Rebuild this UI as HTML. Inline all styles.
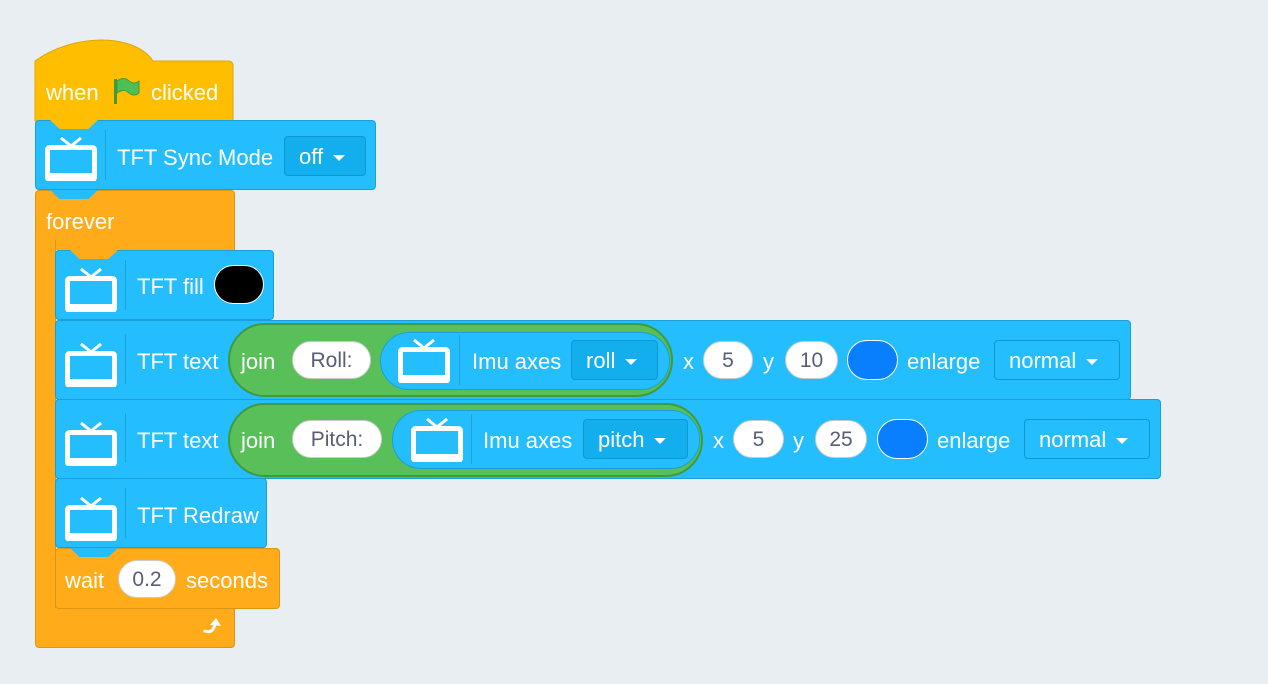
<!DOCTYPE html>
<html><head><meta charset="utf-8"><style>
*{margin:0;padding:0;box-sizing:border-box}
body{width:1268px;height:684px;background:#e9eef2;position:relative;overflow:hidden;font-family:"Liberation Sans","DejaVu Sans",sans-serif;font-size:22px;color:#fff}
.a{position:absolute}
.blue{background:#24bdfd;border:1px solid #1a9fd8;border-radius:4px}
.org{background:#ffab1a;border:1px solid #de9512}
.t{position:absolute;white-space:nowrap;line-height:24px;margin-top:2px}
.sep{position:absolute;width:1px;background:#1aa3dc}
.dd{position:absolute;background:#12aeee;border:1px solid #0e97d1;border-radius:4px}
.dd .t{margin-top:0}
.pill{position:absolute;background:#fff;border:1px solid #ccc;border-radius:20px;color:#575e75;text-align:center;line-height:38px;font-size:21px}
.tri{display:inline-block;width:0;height:0;border-left:6px solid transparent;border-right:6px solid transparent;border-top:6px solid #fff;vertical-align:middle;margin-left:10px}
.notch{position:absolute;width:48px;height:9px;clip-path:polygon(0 0,100% 0,80% 100%,20% 100%)}
</style></head><body>
<svg class="a" style="left:34px;top:39px" width="201" height="85"><path d="M1 22 C40 -6 100 -6 119 22 L194 22 Q199 22 199 27 L199 82 L1 82 Z" fill="#ffbf00" stroke="#e0a500"/></svg>
<div class="t" style="left:46px;top:79px">when</div>
<svg class="a" style="left:112px;top:76px" width="28" height="30"><rect x="2" y="3" width="3" height="25" fill="#45993d"/><path d="M5 5 Q12 0 17 5 Q22 9 27 5 L27 17 Q22 21 17 17 Q12 12 5 17Z" fill="#4cbf56" stroke="#45993d"/></svg>
<div class="t" style="left:151px;top:79px">clicked</div>

<div class="a blue" style="left:35px;top:120px;width:341px;height:70px"></div>
<div class="notch" style="left:50px;top:120px;background:#ffbf00"></div>
<svg class="a" style="left:45px;top:137px" width="52" height="44"><path d="M16 1 L26 9 L36 1" stroke="#fff" stroke-width="3" fill="none"/><rect x="2.5" y="10.5" width="47" height="32" rx="2" fill="none" stroke="#fff" stroke-width="5"/><rect x="2" y="36" width="48" height="7" fill="#fff"/></svg>
<div class="sep" style="left:105px;top:130px;height:50px"></div>
<div class="t" style="left:117px;top:144px">TFT Sync Mode</div>
<div class="dd" style="left:284px;top:136px;width:82px;height:40px"><div class="t" style="left:14px;top:8px">off<span class="tri"></span></div></div>

<div class="a org" style="left:35px;top:190px;width:200px;height:60px;border-radius:4px 4px 0 0;border-bottom:none"></div>
<div class="a org" style="left:35px;top:240px;width:21px;height:380px;border-top:none;border-bottom:none"></div>
<div class="a org" style="left:35px;top:608px;width:200px;height:40px;border-radius:0 0 4px 4px;border-top:none"></div>
<div class="notch" style="left:50px;top:190px;background:#24bdfd"></div>
<div class="t" style="left:46px;top:208px">forever</div>
<svg class="a" style="left:201px;top:616px" width="24" height="22"><path d="M4 15 Q12 18 14 8" stroke="#fff" stroke-width="3" fill="none" stroke-linecap="round"/><path d="M9 9 L15 2 L20 10Z" fill="#fff"/></svg>

<div class="a blue" style="left:55px;top:250px;width:219px;height:70px"></div>
<div class="notch" style="left:70px;top:250px;background:#ffab1a"></div>
<svg class="a" style="left:65px;top:268px" width="52" height="44"><path d="M16 1 L26 9 L36 1" stroke="#fff" stroke-width="3" fill="none"/><rect x="2.5" y="10.5" width="47" height="32" rx="2" fill="none" stroke="#fff" stroke-width="5"/><rect x="2" y="36" width="48" height="7" fill="#fff"/></svg>
<div class="sep" style="left:125px;top:260px;height:50px"></div>
<div class="t" style="left:137px;top:273px">TFT fill</div>
<div class="a" style="left:214px;top:265px;width:50px;height:39px;border-radius:20px;background:#000;border:1px solid #fff"></div>

<div class="a blue" style="left:55px;top:320px;width:1076px;height:80px"></div>
<svg class="a" style="left:65px;top:343px" width="52" height="44"><path d="M16 1 L26 9 L36 1" stroke="#fff" stroke-width="3" fill="none"/><rect x="2.5" y="10.5" width="47" height="32" rx="2" fill="none" stroke="#fff" stroke-width="5"/><rect x="2" y="36" width="48" height="7" fill="#fff"/></svg>
<div class="sep" style="left:125px;top:334px;height:50px"></div>
<div class="t" style="left:137px;top:348px">TFT text</div>
<div class="a" style="left:228px;top:323px;width:445px;height:74px;border-radius:37px;background:#59c059;border:2px solid #3e9a3e"></div>
<div class="t" style="left:241px;top:348px">join</div>
<div class="pill" style="left:292px;top:341px;width:79px;height:38px">Roll:</div>
<div class="a" style="left:380px;top:332px;width:290px;height:58px;border-radius:29px;background:#24bdfd;border:1px solid #1a9fd8"></div>
<svg class="a" style="left:398px;top:339px" width="52" height="44"><path d="M16 1 L26 9 L36 1" stroke="#fff" stroke-width="3" fill="none"/><rect x="2.5" y="10.5" width="47" height="32" rx="2" fill="none" stroke="#fff" stroke-width="5"/><rect x="2" y="36" width="48" height="7" fill="#fff"/></svg>
<div class="sep" style="left:459px;top:335px;height:50px"></div>
<div class="t" style="left:472px;top:348px">Imu axes</div>
<div class="dd" style="left:571px;top:340px;width:87px;height:40px"><div class="t" style="left:14px;top:8px">roll<span class="tri"></span></div></div>
<div class="t" style="left:683px;top:348px">x</div>
<div class="pill" style="left:703px;top:341px;width:50px;height:38px">5</div>
<div class="t" style="left:763px;top:348px">y</div>
<div class="pill" style="left:785px;top:341px;width:53px;height:38px">10</div>
<div class="a" style="left:847px;top:340px;width:51px;height:40px;border-radius:20px;background:#0a7ffe;border:1px solid #fff"></div>
<div class="t" style="left:907px;top:348px">enlarge</div>
<div class="dd" style="left:994px;top:340px;width:126px;height:40px;background:#24bdfd"><div class="t" style="left:14px;top:8px">normal<span class="tri"></span></div></div>

<div class="a blue" style="left:55px;top:399px;width:1106px;height:80px"></div>
<svg class="a" style="left:65px;top:422px" width="52" height="44"><path d="M16 1 L26 9 L36 1" stroke="#fff" stroke-width="3" fill="none"/><rect x="2.5" y="10.5" width="47" height="32" rx="2" fill="none" stroke="#fff" stroke-width="5"/><rect x="2" y="36" width="48" height="7" fill="#fff"/></svg>
<div class="sep" style="left:125px;top:413px;height:50px"></div>
<div class="t" style="left:137px;top:427px">TFT text</div>
<div class="a" style="left:228px;top:403px;width:475px;height:74px;border-radius:37px;background:#59c059;border:2px solid #3e9a3e"></div>
<div class="t" style="left:241px;top:427px">join</div>
<div class="pill" style="left:292px;top:420px;width:90px;height:38px">Pitch:</div>
<div class="a" style="left:392px;top:410px;width:308px;height:59px;border-radius:29px;background:#24bdfd;border:1px solid #1a9fd8"></div>
<svg class="a" style="left:411px;top:418px" width="52" height="44"><path d="M16 1 L26 9 L36 1" stroke="#fff" stroke-width="3" fill="none"/><rect x="2.5" y="10.5" width="47" height="32" rx="2" fill="none" stroke="#fff" stroke-width="5"/><rect x="2" y="36" width="48" height="7" fill="#fff"/></svg>
<div class="sep" style="left:471px;top:414px;height:50px"></div>
<div class="t" style="left:483px;top:427px">Imu axes</div>
<div class="dd" style="left:583px;top:419px;width:105px;height:40px"><div class="t" style="left:14px;top:8px">pitch<span class="tri"></span></div></div>
<div class="t" style="left:713px;top:427px">x</div>
<div class="pill" style="left:733px;top:420px;width:51px;height:38px">5</div>
<div class="t" style="left:793px;top:427px">y</div>
<div class="pill" style="left:815px;top:420px;width:52px;height:38px">25</div>
<div class="a" style="left:877px;top:419px;width:51px;height:40px;border-radius:20px;background:#0a7ffe;border:1px solid #fff"></div>
<div class="t" style="left:937px;top:427px">enlarge</div>
<div class="dd" style="left:1024px;top:419px;width:126px;height:40px;background:#24bdfd"><div class="t" style="left:14px;top:8px">normal<span class="tri"></span></div></div>

<div class="a blue" style="left:55px;top:478px;width:212px;height:70px"></div>
<svg class="a" style="left:65px;top:497px" width="52" height="44"><path d="M16 1 L26 9 L36 1" stroke="#fff" stroke-width="3" fill="none"/><rect x="2.5" y="10.5" width="47" height="32" rx="2" fill="none" stroke="#fff" stroke-width="5"/><rect x="2" y="36" width="48" height="7" fill="#fff"/></svg>
<div class="sep" style="left:125px;top:488px;height:50px"></div>
<div class="t" style="left:137px;top:502px">TFT Redraw</div>

<div class="a org" style="left:55px;top:548px;width:225px;height:61px;border-radius:4px"></div>
<div class="notch" style="left:70px;top:548px;background:#24bdfd"></div>
<div class="notch" style="left:70px;top:609px;background:#ffab1a"></div>
<div class="t" style="left:65px;top:567px">wait</div>
<div class="pill" style="left:118px;top:560px;width:58px;height:38px">0.2</div>
<div class="t" style="left:186px;top:567px">seconds</div>
</body></html>
